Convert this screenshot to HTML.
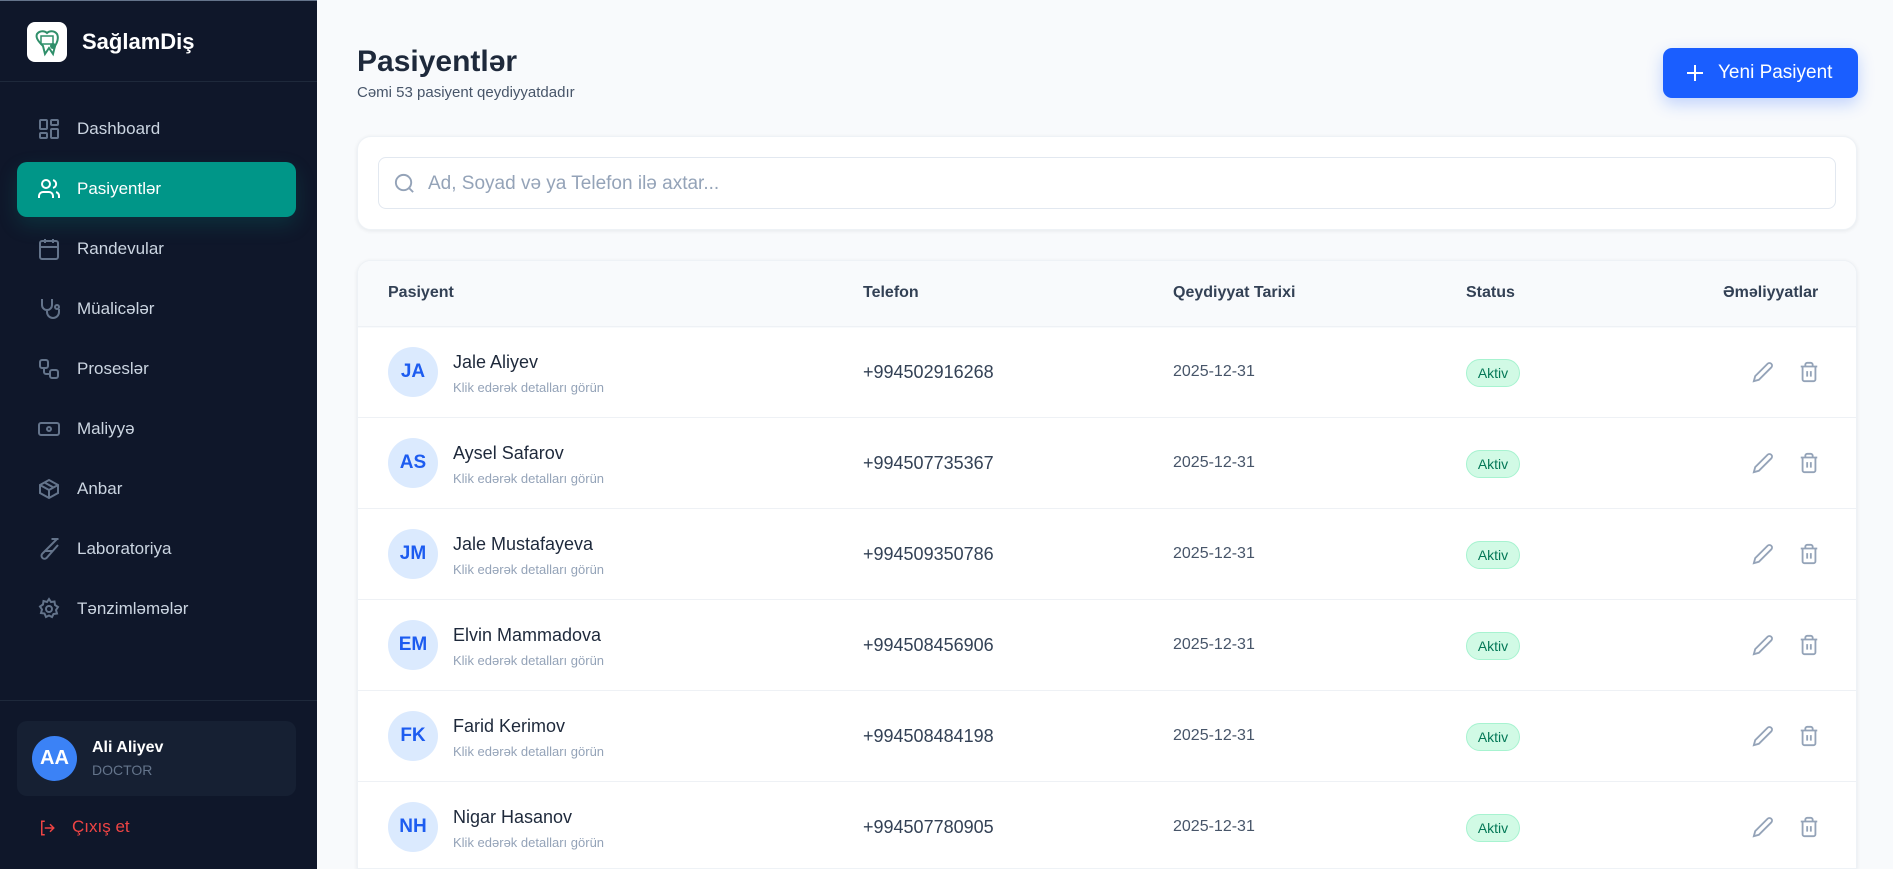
<!DOCTYPE html>
<html style="overflow:hidden;height:869px"><head><meta charset="utf-8"><style>
*{box-sizing:border-box;margin:0;padding:0}
html,body{overflow:hidden}
body{width:1893px;height:869px;overflow:hidden;font-family:"Liberation Sans",Arial,sans-serif;background:#f8fafc;position:relative}
.sb{position:absolute;left:0;top:0;width:317px;height:869px;background:#0f172a;border-top:1px solid #64748b}
.logo{position:absolute;left:27px;top:21px;width:40px;height:40px;background:#fff;border-radius:8px}
.brand{position:absolute;left:82px;top:28px;color:#fff;font-weight:bold;font-size:22px}
.div{position:absolute;left:0;width:317px;height:1px;background:#1e293b}
.nav{position:absolute;left:17px;width:279px;height:55px;border-radius:10px;color:#cbd5e1;font-size:17px}
.nav svg{position:absolute;left:20px;top:15px}
.nav span{position:absolute;left:60px;top:17px}
.nav.act{background:#009688;color:#fff;box-shadow:0 8px 20px rgba(0,150,136,.2)}
.card{position:absolute;background:#fff;border-radius:14px;box-shadow:0 1px 4px rgba(15,23,42,.08);border:1px solid #eef2f6}
.th{position:absolute;top:284px;font-size:16px;font-weight:bold;color:#334155}
.row{position:absolute;left:358px;width:1498px;height:91px;border-top:1px solid #eef1f5}
.av{position:absolute;left:30px;top:20px;width:50px;height:50px;border-radius:50%;background:#dbeafe;color:#1d5cf0;font-weight:bold;font-size:19px;text-align:center;line-height:50px}
.nm{position:absolute;left:95px;top:25px;font-size:18px;color:#1e293b}
.sub{position:absolute;left:95px;top:53px;font-size:13px;color:#94a3b8}
.ph{position:absolute;left:505px;top:35px;font-size:18px;color:#334155}
.dt{position:absolute;left:815px;top:36px;font-size:16px;color:#475569}
.bd{position:absolute;left:1108px;top:32px;width:54px;height:28px;border-radius:14px;background:#d1fae5;border:1px solid #a7f3d0;color:#047857;font-size:14px;text-align:center;line-height:26px}
.ic{position:absolute;top:34px}
</style></head><body>
<div class="sb">
<div class="logo"><svg width="40" height="40" viewBox="0 0 40 40"><path d="M10 12c3-4 8-3 10-1 2-2 7-3 10 1 2 4 0 9-2 12l-2 8-4-6-4 6-2-8c-3-3-8-8-6-12z" fill="none" stroke="#2f8f6a" stroke-width="2"/><rect x="14" y="14" width="12" height="8" fill="none" stroke="#2f8f6a" stroke-width="1.5"/><circle cx="26" cy="24" r="3" fill="#2f8f6a"/></svg></div>
<div class="brand">SağlamDiş</div>
<div class="div" style="top:80px"></div>
<div class="nav" style="top:101px"><svg width="24" height="24" viewBox="0 0 24 24" fill="none" stroke="#64748b" stroke-width="2"><rect x="3" y="3" width="7" height="9" rx="1"/><rect x="14" y="3" width="7" height="5" rx="1"/><rect x="14" y="12" width="7" height="9" rx="1"/><rect x="3" y="16" width="7" height="5" rx="1"/></svg><span>Dashboard</span></div>
<div class="nav act" style="top:161px"><svg width="24" height="24" viewBox="0 0 24 24" fill="none" stroke="#fff" stroke-width="2"><circle cx="9" cy="7" r="4"/><path d="M2 21v-2a4 4 0 0 1 4-4h6a4 4 0 0 1 4 4v2M16 3.1a4 4 0 0 1 0 7.8M22 21v-2a4 4 0 0 0-3-3.9"/></svg><span>Pasiyentlər</span></div>
<div class="nav" style="top:221px"><svg width="24" height="24" viewBox="0 0 24 24" fill="none" stroke="#64748b" stroke-width="2"><rect x="3" y="4" width="18" height="18" rx="2"/><path d="M16 2v4M8 2v4M3 10h18"/></svg><span>Randevular</span></div>
<div class="nav" style="top:281px"><svg width="24" height="24" viewBox="0 0 24 24" fill="none" stroke="#64748b" stroke-width="2"><path d="M5 2v6a5 5 0 0 0 10 0V2M10 13v2a6 6 0 0 0 12 0v-3"/><circle cx="20" cy="10" r="2"/></svg><span>Müalicələr</span></div>
<div class="nav" style="top:341px"><svg width="24" height="24" viewBox="0 0 24 24" fill="none" stroke="#64748b" stroke-width="2"><rect x="3" y="3" width="8" height="8" rx="2"/><rect x="13" y="13" width="8" height="8" rx="2"/><path d="M7 11v4a2 2 0 0 0 2 2h4"/></svg><span>Proseslər</span></div>
<div class="nav" style="top:401px"><svg width="24" height="24" viewBox="0 0 24 24" fill="none" stroke="#64748b" stroke-width="2"><rect x="2" y="6" width="20" height="12" rx="2"/><circle cx="12" cy="12" r="2"/><path d="M6 12h.01M18 12h.01"/></svg><span>Maliyyə</span></div>
<div class="nav" style="top:461px"><svg width="24" height="24" viewBox="0 0 24 24" fill="none" stroke="#64748b" stroke-width="2"><path d="M21 8l-9-5-9 5v8l9 5 9-5zM3 8l9 5 9-5M12 13v8M7.5 5.5l9 5"/></svg><span>Anbar</span></div>
<div class="nav" style="top:521px"><svg width="24" height="24" viewBox="0 0 24 24" fill="none" stroke="#64748b" stroke-width="2"><path d="M14.5 2h7M20 2L5.5 16.5a3 3 0 0 0 4 4.5L21 8M8.5 14h7"/></svg><span>Laboratoriya</span></div>
<div class="nav" style="top:581px"><svg width="24" height="24" viewBox="0 0 24 24" fill="none" stroke="#64748b" stroke-width="2"><circle cx="12" cy="12" r="3"/><path d="M12 2l2 3 3.5-.5.5 3.5 3 2-2 3 1 3.5-3.5.5L15 20l-3-1.5L9 20l-1.5-3.5L4 16l1-3.5-2-3 3-2 .5-3.5L10 5z"/></svg><span>Tənzimləmələr</span></div>
<div class="div" style="top:699px"></div>
<div style="position:absolute;left:17px;top:720px;width:279px;height:75px;border-radius:10px;background:#162033"></div>
<div style="position:absolute;left:32px;top:735px;width:45px;height:45px;border-radius:50%;background:#3b82f6;color:#fff;font-weight:bold;font-size:20px;text-align:center;line-height:45px">AA</div>
<div style="position:absolute;left:92px;top:738px;color:#fff;font-weight:bold;font-size:16px">Ali Aliyev</div>
<div style="position:absolute;left:92px;top:761px;color:#64748b;font-size:14px">DOCTOR</div>
<svg style="position:absolute;left:38px;top:818px" width="18" height="18" viewBox="0 0 24 24" fill="none" stroke="#ef4444" stroke-width="2"><path d="M9 21H5V3h4M16 17l5-5-5-5M21 12H9"/></svg>
<div style="position:absolute;left:72px;top:816px;color:#ef4444;font-size:17px">Çıxış et</div>
</div>

<div style="position:absolute;left:357px;top:45px;font-size:30px;font-weight:bold;color:#1e293b">Pasiyentlər</div>
<div style="position:absolute;left:357px;top:84px;font-size:15px;color:#475569">Cəmi 53 pasiyent qeydiyyatdadır</div>
<div style="position:absolute;left:1663px;top:48px;width:195px;height:50px;border-radius:9px;background:#1a5eff;box-shadow:0 6px 16px rgba(26,94,255,.25);color:#fff;font-size:19px">
<svg style="position:absolute;left:22px;top:15px" width="20" height="20" viewBox="0 0 20 20" stroke="#fff" stroke-width="2"><path d="M10 2v16M2 10h16"/></svg>
<span style="position:absolute;left:55px;top:14px">Yeni Pasiyent</span></div>

<div class="card" style="left:357px;top:136px;width:1500px;height:94px"></div>
<div style="position:absolute;left:378px;top:157px;width:1458px;height:52px;border:1px solid #e2e8f0;border-radius:8px;background:#fff"></div>
<svg style="position:absolute;left:393px;top:172px" width="23" height="23" viewBox="0 0 24 24" fill="none" stroke="#94a3b8" stroke-width="2"><circle cx="11" cy="11" r="8"/><path d="M21 21l-4.3-4.3"/></svg>
<div style="position:absolute;left:428px;top:173px;font-size:19px;color:#94a3b8">Ad, Soyad və ya Telefon ilə axtar...</div>

<div class="card" style="left:357px;top:260px;width:1500px;height:609px;overflow:hidden;border-bottom-left-radius:0;border-bottom-right-radius:0"><div style="height:67px;background:#f8fafc"></div></div>
<div class="th" style="left:388px">Pasiyent</div>
<div class="th" style="left:863px">Telefon</div>
<div class="th" style="left:1173px">Qeydiyyat Tarixi</div>
<div class="th" style="left:1466px">Status</div>
<div class="th" style="left:1723px">Əməliyyatlar</div>

<div class="row" style="top:326px"><div class="av">JA</div><div class="nm">Jale Aliyev</div><div class="sub">Klik edərək detalları görün</div><div class="ph">+994502916268</div><div class="dt">2025-12-31</div><div class="bd">Aktiv</div>
<svg class="ic" style="left:1394px" width="22" height="22" viewBox="0 0 24 24" fill="none" stroke="#94a3b8" stroke-width="2"><path d="M17 3a2.8 2.8 0 1 1 4 4L7.5 20.5 2 22l1.5-5.5z"/></svg><svg class="ic" style="left:1440px" width="22" height="22" viewBox="0 0 24 24" fill="none" stroke="#94a3b8" stroke-width="2"><path d="M3 6h18M19 6v14a2 2 0 0 1-2 2H7a2 2 0 0 1-2-2V6M8 6V4a2 2 0 0 1 2-2h4a2 2 0 0 1 2 2v2M10 11v6M14 11v6"/></svg></div>
<div class="row" style="top:417px"><div class="av">AS</div><div class="nm">Aysel Safarov</div><div class="sub">Klik edərək detalları görün</div><div class="ph">+994507735367</div><div class="dt">2025-12-31</div><div class="bd">Aktiv</div>
<svg class="ic" style="left:1394px" width="22" height="22" viewBox="0 0 24 24" fill="none" stroke="#94a3b8" stroke-width="2"><path d="M17 3a2.8 2.8 0 1 1 4 4L7.5 20.5 2 22l1.5-5.5z"/></svg><svg class="ic" style="left:1440px" width="22" height="22" viewBox="0 0 24 24" fill="none" stroke="#94a3b8" stroke-width="2"><path d="M3 6h18M19 6v14a2 2 0 0 1-2 2H7a2 2 0 0 1-2-2V6M8 6V4a2 2 0 0 1 2-2h4a2 2 0 0 1 2 2v2M10 11v6M14 11v6"/></svg></div>
<div class="row" style="top:508px"><div class="av">JM</div><div class="nm">Jale Mustafayeva</div><div class="sub">Klik edərək detalları görün</div><div class="ph">+994509350786</div><div class="dt">2025-12-31</div><div class="bd">Aktiv</div>
<svg class="ic" style="left:1394px" width="22" height="22" viewBox="0 0 24 24" fill="none" stroke="#94a3b8" stroke-width="2"><path d="M17 3a2.8 2.8 0 1 1 4 4L7.5 20.5 2 22l1.5-5.5z"/></svg><svg class="ic" style="left:1440px" width="22" height="22" viewBox="0 0 24 24" fill="none" stroke="#94a3b8" stroke-width="2"><path d="M3 6h18M19 6v14a2 2 0 0 1-2 2H7a2 2 0 0 1-2-2V6M8 6V4a2 2 0 0 1 2-2h4a2 2 0 0 1 2 2v2M10 11v6M14 11v6"/></svg></div>
<div class="row" style="top:599px"><div class="av">EM</div><div class="nm">Elvin Mammadova</div><div class="sub">Klik edərək detalları görün</div><div class="ph">+994508456906</div><div class="dt">2025-12-31</div><div class="bd">Aktiv</div>
<svg class="ic" style="left:1394px" width="22" height="22" viewBox="0 0 24 24" fill="none" stroke="#94a3b8" stroke-width="2"><path d="M17 3a2.8 2.8 0 1 1 4 4L7.5 20.5 2 22l1.5-5.5z"/></svg><svg class="ic" style="left:1440px" width="22" height="22" viewBox="0 0 24 24" fill="none" stroke="#94a3b8" stroke-width="2"><path d="M3 6h18M19 6v14a2 2 0 0 1-2 2H7a2 2 0 0 1-2-2V6M8 6V4a2 2 0 0 1 2-2h4a2 2 0 0 1 2 2v2M10 11v6M14 11v6"/></svg></div>
<div class="row" style="top:690px"><div class="av">FK</div><div class="nm">Farid Kerimov</div><div class="sub">Klik edərək detalları görün</div><div class="ph">+994508484198</div><div class="dt">2025-12-31</div><div class="bd">Aktiv</div>
<svg class="ic" style="left:1394px" width="22" height="22" viewBox="0 0 24 24" fill="none" stroke="#94a3b8" stroke-width="2"><path d="M17 3a2.8 2.8 0 1 1 4 4L7.5 20.5 2 22l1.5-5.5z"/></svg><svg class="ic" style="left:1440px" width="22" height="22" viewBox="0 0 24 24" fill="none" stroke="#94a3b8" stroke-width="2"><path d="M3 6h18M19 6v14a2 2 0 0 1-2 2H7a2 2 0 0 1-2-2V6M8 6V4a2 2 0 0 1 2-2h4a2 2 0 0 1 2 2v2M10 11v6M14 11v6"/></svg></div>
<div class="row" style="top:781px;height:88px"><div class="av">NH</div><div class="nm">Nigar Hasanov</div><div class="sub">Klik edərək detalları görün</div><div class="ph">+994507780905</div><div class="dt">2025-12-31</div><div class="bd">Aktiv</div>
<svg class="ic" style="left:1394px" width="22" height="22" viewBox="0 0 24 24" fill="none" stroke="#94a3b8" stroke-width="2"><path d="M17 3a2.8 2.8 0 1 1 4 4L7.5 20.5 2 22l1.5-5.5z"/></svg><svg class="ic" style="left:1440px" width="22" height="22" viewBox="0 0 24 24" fill="none" stroke="#94a3b8" stroke-width="2"><path d="M3 6h18M19 6v14a2 2 0 0 1-2 2H7a2 2 0 0 1-2-2V6M8 6V4a2 2 0 0 1 2-2h4a2 2 0 0 1 2 2v2M10 11v6M14 11v6"/></svg></div>
</body></html>
